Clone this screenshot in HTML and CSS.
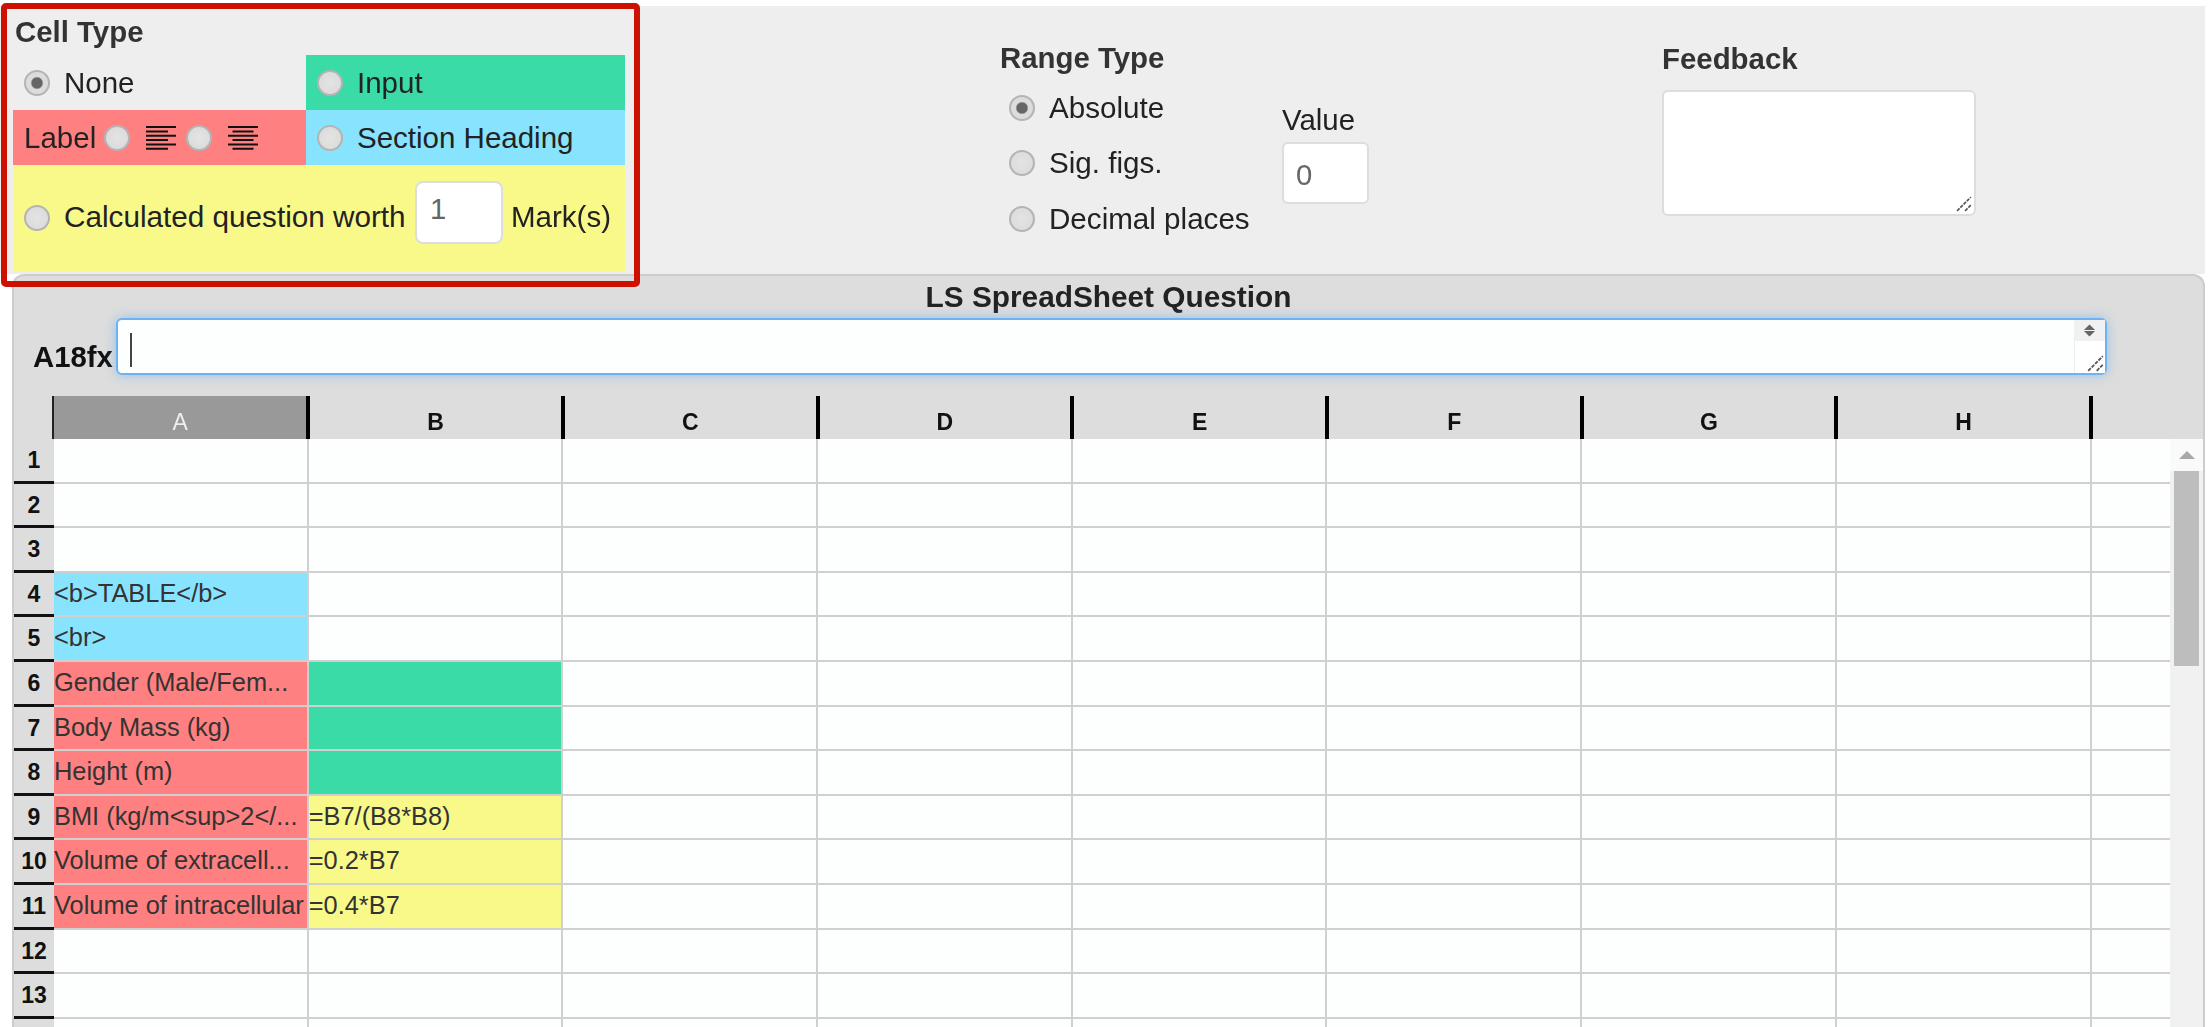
FILE: index.html
```html
<!DOCTYPE html>
<html lang="en">
<head>
<meta charset="utf-8">
<title>LS SpreadSheet Question</title>
<link rel="stylesheet" href="styles.css">
</head>
<body>
<div class="page">
  <section class="top">
    <div class="cell-type">
      <h3 class="cell-type-title">Cell Type</h3>
      <div class="type-grid">
        <div class="type type-none"><input class="radio" type="radio" name="ct" checked><span class="lbl">None</span></div>
        <div class="type type-input"><input class="radio" type="radio" name="ct"><span class="lbl">Input</span></div>
        <div class="type type-label">
          <span class="label-word">Label</span>
          <input class="radio" type="radio" name="ct">
          <svg class="align-icon" viewBox="0 0 30 24"><path d="M0 1H30M0 5.4H22M0 9.8H30M0 14H22M0 18.4H30M0 22.8H22"/></svg>
          <input class="radio" type="radio" name="ct">
          <svg class="align-icon" viewBox="0 0 30 24"><path d="M0 1H30M4.5 5.4H25.5M0 9.8H30M4.5 14H25.5M0 18.4H30M4.5 22.8H25.5"/></svg>
        </div>
        <div class="type type-heading"><input class="radio" type="radio" name="ct"><span class="lbl">Section Heading</span></div>
        <div class="type type-calc">
          <input class="radio" type="radio" name="ct"><span class="lbl calc-lbl">Calculated question worth</span>
          <input class="marks" type="text" value="1">
          <span class="marks-unit">Mark(s)</span>
        </div>
      </div>
    </div>
    <div class="range-type">
      <h3 class="range-title">Range Type</h3>
      <div class="range-body">
        <div class="range-options">
          <div class="range-opt"><input class="radio" type="radio" name="rt" checked><span class="lbl">Absolute</span></div>
          <div class="range-opt"><input class="radio" type="radio" name="rt"><span class="lbl">Sig. figs.</span></div>
          <div class="range-opt"><input class="radio" type="radio" name="rt"><span class="lbl">Decimal places</span></div>
        </div>
        <div class="value">
          <div class="value-label">Value</div>
          <input class="value-input" type="text" value="0">
        </div>
      </div>
    </div>
    <div class="feedback">
      <h3 class="feedback-title">Feedback</h3>
      <div class="feedback-box">
        <svg class="grip" viewBox="0 0 14 14"><path d="M1 13L13 1M8 13L13 8"/></svg>
      </div>
    </div>
  </section>

  <section class="sheet">
    <div class="sheet-title">LS SpreadSheet Question</div>
    <div class="formula">
      <span class="cell-ref">A18fx</span>
      <div class="formula-box">
        <span class="caret"></span>
        <div class="formula-side">
          <div class="spin"><svg class="spin-icon" viewBox="0 0 14 14"><path d="M7 0.5L13 6.4H1ZM7 13.5L1 7.6H13Z"/></svg></div>
          <div class="spin-rest"><svg class="grip grip-large" viewBox="0 0 14 14"><path d="M1 13L13 1M8 13L13 8"/></svg></div>
        </div>
      </div>
    </div>
    <div class="col-heads">
      <div class="corner"></div>
      <div class="col-head col-active">A</div>
      <div class="col-head">B</div>
      <div class="col-head">C</div>
      <div class="col-head">D</div>
      <div class="col-head">E</div>
      <div class="col-head">F</div>
      <div class="col-head">G</div>
      <div class="col-head">H</div>
    </div>
    <div class="body">
      <div class="rows">
        <div class="row"><div class="num">1</div><div class="c"></div><div class="c"></div><div class="c"></div><div class="c"></div><div class="c"></div><div class="c"></div><div class="c"></div><div class="c"></div><div class="c end"></div></div>
        <div class="row"><div class="num">2</div><div class="c"></div><div class="c"></div><div class="c"></div><div class="c"></div><div class="c"></div><div class="c"></div><div class="c"></div><div class="c"></div><div class="c end"></div></div>
        <div class="row"><div class="num">3</div><div class="c"></div><div class="c"></div><div class="c"></div><div class="c"></div><div class="c"></div><div class="c"></div><div class="c"></div><div class="c"></div><div class="c end"></div></div>
        <div class="row"><div class="num">4</div><div class="c blue">&lt;b&gt;TABLE&lt;/b&gt;</div><div class="c"></div><div class="c"></div><div class="c"></div><div class="c"></div><div class="c"></div><div class="c"></div><div class="c"></div><div class="c end"></div></div>
        <div class="row"><div class="num">5</div><div class="c blue">&lt;br&gt;</div><div class="c"></div><div class="c"></div><div class="c"></div><div class="c"></div><div class="c"></div><div class="c"></div><div class="c"></div><div class="c end"></div></div>
        <div class="row"><div class="num">6</div><div class="c red">Gender (Male/Fem...</div><div class="c green"></div><div class="c"></div><div class="c"></div><div class="c"></div><div class="c"></div><div class="c"></div><div class="c"></div><div class="c end"></div></div>
        <div class="row"><div class="num">7</div><div class="c red">Body Mass (kg)</div><div class="c green"></div><div class="c"></div><div class="c"></div><div class="c"></div><div class="c"></div><div class="c"></div><div class="c"></div><div class="c end"></div></div>
        <div class="row"><div class="num">8</div><div class="c red">Height (m)</div><div class="c green"></div><div class="c"></div><div class="c"></div><div class="c"></div><div class="c"></div><div class="c"></div><div class="c"></div><div class="c end"></div></div>
        <div class="row"><div class="num">9</div><div class="c red">BMI (kg/m&lt;sup&gt;2&lt;/...</div><div class="c yellow">=B7/(B8*B8)</div><div class="c"></div><div class="c"></div><div class="c"></div><div class="c"></div><div class="c"></div><div class="c"></div><div class="c end"></div></div>
        <div class="row"><div class="num">10</div><div class="c red">Volume of extracell...</div><div class="c yellow">=0.2*B7</div><div class="c"></div><div class="c"></div><div class="c"></div><div class="c"></div><div class="c"></div><div class="c"></div><div class="c end"></div></div>
        <div class="row"><div class="num">11</div><div class="c red">Volume of intracellular</div><div class="c yellow">=0.4*B7</div><div class="c"></div><div class="c"></div><div class="c"></div><div class="c"></div><div class="c"></div><div class="c"></div><div class="c end"></div></div>
        <div class="row"><div class="num">12</div><div class="c"></div><div class="c"></div><div class="c"></div><div class="c"></div><div class="c"></div><div class="c"></div><div class="c"></div><div class="c"></div><div class="c end"></div></div>
        <div class="row"><div class="num">13</div><div class="c"></div><div class="c"></div><div class="c"></div><div class="c"></div><div class="c"></div><div class="c"></div><div class="c"></div><div class="c"></div><div class="c end"></div></div>
        <div class="row"><div class="num"></div><div class="c"></div><div class="c"></div><div class="c"></div><div class="c"></div><div class="c"></div><div class="c"></div><div class="c"></div><div class="c"></div><div class="c end"></div></div>
      </div>
      <div class="scrollbar">
        <div class="scroll-btn"><svg class="scroll-arrow" viewBox="0 0 16 8"><path d="M8 0L16 8H0Z"/></svg></div>
        <div class="scroll-thumb"></div>
      </div>
    </div>
  </section>
</div>
<div class="callout"></div>
</body>
</html>
```
FILE: styles.css
```css
* { box-sizing: border-box; }
html, body { margin: 0; padding: 0; background: #fff; }
body {
  position: relative;
  height: 1027px;
  overflow: hidden;
  font-family: "Liberation Sans", Arial, sans-serif;
  color: #333;
}
.page {
  width: 2205px;
  padding-top: 6px;
  filter: blur(0.75px);
}
h3 { margin: 0; font-size: 29.4px; font-weight: 700; color: #333; }

/* top panel */
.top {
  display: flex;
  height: 268px;
  background: #eee;
}
.cell-type { margin-left: 13px; width: 612px; }
.cell-type-title { height: 49px; padding: 10px 0 0 2px; line-height: 32px; }
.type-grid {
  display: grid;
  grid-template-columns: 293px 319px;
  grid-template-rows: 55px 55px 107px;
}
.type { display: flex; align-items: center; font-size: 29.5px; color: #222; }
.type-input { background: #3adba6; padding-left: 11px; }
.type-none { padding-left: 11px; }
.type-label { background: #ff8080; padding-left: 11px; }
.type-heading { background: #88e3ff; padding-left: 11px; }
.type-calc { grid-column: 1 / 3; background: #f9f98a; padding-left: 11px; padding-bottom: 1px; }
.radio {
  appearance: none;
  -webkit-appearance: none;
  flex: none;
  width: 26px;
  height: 26px;
  margin: 0;
  border-radius: 50%;
  border: 2px solid #b4b4b4;
  background: radial-gradient(circle, #e4e4e4 0, #dcdcdc 70%, #d0d0d0 100%);
}
.radio:checked { background: radial-gradient(circle, #666 0, #666 5px, #dcdcdc 6.5px, #dcdcdc 100%); }
.lbl { margin-left: 14px; white-space: nowrap; }
.label-word { margin-right: 8px; }
.align-icon { flex: none; width: 30px; height: 24px; margin: 0 10px 0 16px; }
.align-icon path { fill: none; stroke: #111; stroke-width: 2; }
.calc-lbl { width: 338px; margin-top: -3px; font-size: 29.7px; }
.marks {
  width: 88px;
  height: 63px;
  margin: -12px 0 0 13px;
  padding: 0 0 6px 13px;
  border: 2px solid #ddd;
  border-radius: 8px;
  background: #fff;
  font: 29.3px "Liberation Sans", Arial, sans-serif;
  color: #666;
  outline: none;
}
.marks-unit { margin-left: 8px; margin-top: -3px; white-space: nowrap; }

.range-type { margin-left: 375px; width: 662px; flex: none; }
.range-title { height: 70px; padding-top: 36px; line-height: 32px; }
.range-body { display: flex; }
.range-options { width: 282px; padding: 4px 0 0 9px; }
.range-opt { display: flex; align-items: center; height: 55.5px; font-size: 29.6px; color: #222; }
.value-label { font-size: 29.4px; color: #222; height: 39px; margin-top: 27px; line-height: 34px; }
.value-input {
  display: block;
  width: 87px;
  height: 62px;
  padding: 4px 0 0 12px;
  border: 2px solid #ddd;
  border-radius: 6px;
  background: #fff;
  font: 29.3px "Liberation Sans", Arial, sans-serif;
  color: #666;
  outline: none;
}
.feedback { flex: none; }
.feedback-title { height: 84px; padding-top: 37px; line-height: 32px; }
.feedback-box {
  position: relative;
  width: 314px;
  height: 126px;
  border: 2px solid #ddd;
  border-radius: 6px;
  background: #fff;
}
.grip { position: absolute; right: 2px; bottom: 2px; width: 16px; height: 16px; }
.grip-large { right: 1px; bottom: 1px; width: 17px; height: 17px; }
.grip path { fill: none; stroke: #555; stroke-width: 1.5; stroke-dasharray: 3 1; }

/* spreadsheet */
.sheet {
  margin-left: 12px;
  height: 760px;
  background: #ddd;
  border: 2px solid #ccc;
  border-bottom: 0;
  border-radius: 12px 12px 0 0;
}
.sheet-title {
  height: 42px;
  text-align: center;
  font-size: 29.8px;
  font-weight: 700;
  line-height: 42px;
  color: #222;
}
.formula { display: flex; align-items: flex-end; height: 57px; }
.cell-ref {
  width: 102px;
  padding: 0 0 1px 19px;
  font-size: 29.3px;
  font-weight: 700;
  color: #111;
  line-height: 34px;
}
.formula-box {
  position: relative;
  width: 1991px;
  height: 57px;
  border: 2px solid #6db3f2;
  border-radius: 6px;
  background: #fdfefe;
  box-shadow: 0 0 12px rgba(90, 170, 240, .55);
}
.caret { position: absolute; left: 12px; top: 13px; width: 2px; height: 34px; background: #444; }
.formula-side { position: absolute; right: 0; top: 0; bottom: 0; width: 31px; display: flex; flex-direction: column; }
.spin { height: 21px; background: #f1f1f1; display: flex; align-items: center; justify-content: center; }
.spin-icon { width: 13px; height: 13px; fill: #666; }
.spin-rest { position: relative; flex: 1; background: #fff; border-left: 1px solid #eee; }

.col-heads { display: flex; height: 43px; margin-top: 21px; }
.corner { flex: none; width: 40px; border-right: 2px solid #222; }
.col-head {
  flex: none;
  width: 254.7px;
  padding-top: 3px;
  border-right: 4px solid #000;
  text-align: center;
  font-size: 23px;
  font-weight: 700;
  line-height: 47px;
  color: #111;
}
.col-head.col-active { width: 256.2px; background: #999; color: #eee; font-weight: 400; }

.body { display: flex; height: 590px; overflow: hidden; }
.rows { flex: 1; min-width: 0; background: #fdfefe; }
.row { display: flex; height: 44.6px; }
.num {
  flex: none;
  width: 40px;
  background: #ddd;
  border-bottom: 3px solid #111;
  text-align: center;
  font-size: 23px;
  font-weight: 700;
  line-height: 43px;
  color: #111;
}
.c {
  flex: none;
  width: 254.7px;
  border-right: 2.5px solid #d0d0d0;
  border-bottom: 2.5px solid #d0d0d0;
  font-size: 25.4px;
  line-height: 41px;
  color: #333;
  white-space: nowrap;
  overflow: hidden;
}
.c.end { flex: 1; width: auto; border-right: 0; }
.blue { background: #88e3ff; }
.red { background: #ff8080; }
.green { background: #3adba6; }
.yellow { background: #f9f98a; }
.scrollbar { flex: none; width: 33px; background: #f1f1f1; padding: 0 4px; }
.scroll-btn { height: 32px; display: flex; align-items: center; justify-content: center; margin: 0 -4px; background: #fafafa; }
.scroll-arrow { width: 16px; height: 8px; fill: #a8a8a8; }
.scroll-thumb { height: 195px; background: #bdbdbd; }

/* annotation drawn over the page */
.callout {
  position: absolute;
  left: 1px;
  top: 3px;
  width: 639px;
  height: 284px;
  border: 6px solid #cc1100;
  border-radius: 5px;
}
```
